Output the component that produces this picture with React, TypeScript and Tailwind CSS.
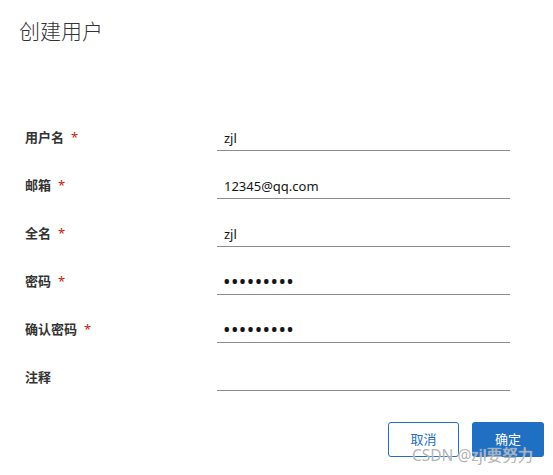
import React from 'react'

const fields = [
  { label: '用户名', value: 'zjl', required: true, type: 'text' },
  { label: '邮箱', value: '12345@qq.com', required: true, type: 'text' },
  { label: '全名', value: 'zjl', required: true, type: 'text' },
  { label: '密码', value: '123456789', required: true, type: 'password' },
  { label: '确认密码', value: '123456789', required: true, type: 'password' },
  { label: '注释', value: '', required: false, type: 'text' },
]

export default function App() {
  return (
    <div className="relative w-[553px] h-[475px] bg-white overflow-hidden font-['Noto_Sans','Noto_Sans_CJK_SC',sans-serif]">
      {/* Header */}
      <h1 className="pl-[19px] pt-[16px] text-[21px] leading-[30px] font-light text-[#333]">创建用户</h1>

      {/* Form */}
      <div className="mt-[57px]">
        {fields.map((f) => (
          <div key={f.label} className="flex items-end h-[48px]">
            <label className="w-[217px] pl-[25px] h-[26px] flex items-center text-[13px] font-bold text-[#333]">
              {f.label}
              {f.required && <span className="ml-[7px] text-[#c9190b] font-normal">*</span>}
            </label>
            <input
              type={f.type}
              readOnly
              value={f.value}
              className={
                f.type === 'password'
                  ? 'w-[293px] h-[26px] px-[6px] text-[20px] tracking-[0.4px] text-[#151515] border-b border-[#8a8d90] outline-none bg-transparent'
                  : 'w-[293px] h-[26px] px-[7px] text-[13px] text-[#151515] border-b border-[#8a8d90] outline-none bg-transparent'
              }
            />
          </div>
        ))}
      </div>

      {/* Actions */}
      <div className="flex justify-end gap-[13px] pr-[9px] mt-[31px]">
        <button className="w-[71px] h-[35px] rounded-[3px] border border-[#1f6fc2] text-[#1f6fc2] text-[13px] bg-white">
          取消
        </button>
        <button className="w-[72px] h-[35px] rounded-[3px] bg-[#1f6fc2] text-white text-[13px]">
          确定
        </button>
      </div>

      {/* Watermark */}
      <div className="absolute left-[412px] top-[444px] text-[15.5px] leading-[22px] text-[#a0a0a0]/80 [text-shadow:0_0_1px_#fff] whitespace-nowrap">
        CSDN @zjl要努力
      </div>
    </div>
  )
}
